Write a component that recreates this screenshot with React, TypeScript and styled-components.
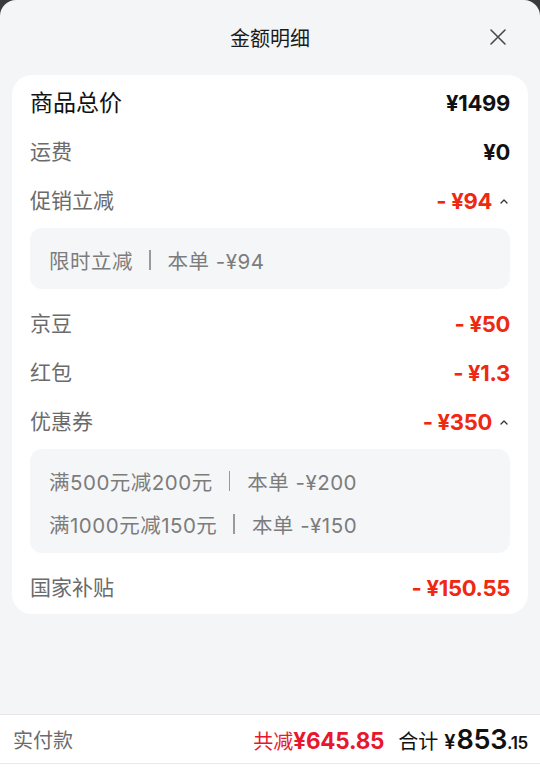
import React from "react";
import styled, { createGlobalStyle } from "styled-components";

const Global = createGlobalStyle`
  html, body { margin: 0; padding: 0; background: #3b3b3d; }
  body { font-family: "Noto Sans CJK SC", "Noto Sans", sans-serif; }
  * { box-sizing: border-box; }
`;

const Sheet = styled.div`
  width: 540px;
  height: 781px;
  background: #f4f5f7;
  border-radius: 16px 16px 0 0;
  display: flex;
  flex-direction: column;
  overflow: hidden;
`;

const Header = styled.div`
  height: 75px;
  flex: none;
  display: flex;
  align-items: center;
  justify-content: center;
  position: relative;
`;

const Title = styled.div`
  font-size: 20px;
  color: #1a1a1a;
  line-height: 1;
`;

const Close = styled.button`
  position: absolute;
  right: 33px;
  top: 28px;
  width: 18px;
  height: 18px;
  padding: 0;
  border: none;
  background: none;
  display: flex;
`;

const Card = styled.div`
  margin: 0 12px;
  background: #fff;
  border-radius: 20px;
  padding: 3px 18px 2px;
  display: flex;
  flex-direction: column;
`;

const Row = styled.div`
  height: 49px;
  display: flex;
  align-items: center;
  justify-content: space-between;
`;

const Label = styled.span<{ $main?: boolean }>`
  font-size: ${(p) => (p.$main ? "23px" : "21px")};
  color: ${(p) => (p.$main ? "#111" : "#6b6b6b")};
  line-height: 1;
  position: relative;
  top: -1px;
`;

const ValueWrap = styled.div`
  display: flex;
  align-items: center;
`;

const Value = styled.span<{ $red?: boolean }>`
  font-family: Inter, "Noto Sans", sans-serif;
  font-weight: 700;
  font-size: 22px;
  letter-spacing: -0.3px;
  color: ${(p) => (p.$red ? "#ef2812" : "#111")};
  line-height: 1;
`;

const Caret = styled.svg`
  margin-left: 6px;
  width: 12px;
  height: 8px;
  flex: none;
`;

const Detail = styled.div`
  background: #f5f6f8;
  border-radius: 12px;
  padding: 10px 19px 8px;
  margin: 3px 0 10px;
  display: flex;
  flex-direction: column;
`;

const DetailLine = styled.div`
  height: 43px;
  display: flex;
  align-items: center;
  font-family: Inter, "Noto Sans CJK SC", sans-serif;
  font-size: 20.5px;
  color: #7c7c7c;
  white-space: pre;
`;

const Part = styled.span`
  letter-spacing: 0.5px;
`;

const Sep = styled.span`
  width: 1.5px;
  height: 20px;
  background: #9a9a9a;
  margin: 0 17px 0 16px;
`;

const Spacer = styled.div`
  flex: 1;
`;

const Bottom = styled.div`
  flex: none;
  background: #fff;
  border-top: 1px solid #e6e6e8;
  padding-bottom: 17px;
`;

const Bar = styled.div`
  height: 49px;
  border-bottom: 1px solid #e9e9eb;
  display: flex;
  align-items: center;
  justify-content: space-between;
  padding: 0 12px 0 13px;
`;

const BarLabel = styled.span`
  font-size: 20px;
  color: #6b6b6b;
`;

const Totals = styled.div`
  display: flex;
  align-items: baseline;
`;

const SaveText = styled.span`
  font-size: 20px;
  color: #e8172d;
`;

const SaveNum = styled.span`
  font-family: Inter, "Noto Sans", sans-serif;
  font-weight: 700;
  font-size: 22.5px;
  color: #e8172d;
  letter-spacing: -0.2px;
`;

const SumText = styled.span`
  font-size: 20px;
  color: #111;
  margin-left: 14px;
  margin-right: 6px;
`;

const Yen = styled.span`
  font-family: Inter, "Noto Sans", sans-serif;
  font-weight: 600;
  font-size: 20px;
  color: #111;
  margin-right: 1px;
`;

const Big = styled.span<{ $size: number }>`
  font-family: Inter, "Noto Sans", sans-serif;
  font-weight: 600;
  font-size: ${(p) => p.$size}px;
  color: #111;
  letter-spacing: -0.3px;
`;

const UpCaret = () => (
  <Caret viewBox="0 0 12 8">
    <polyline points="3,6 6,3 9,6" fill="none" stroke="#333" strokeWidth="1.3" strokeLinecap="round" strokeLinejoin="round" />
  </Caret>
);

const Line = ({ name, amount }: { name: string; amount: string }) => (
  <DetailLine>
    <Part>{name}</Part>
    <Sep />
    <Part>{amount}</Part>
  </DetailLine>
);

export default function App() {
  return (
    <>
      <Global />
      <Sheet>
        <Header>
          <Title>金额明细</Title>
          <Close aria-label="关闭">
            <svg width="18" height="18" viewBox="0 0 18 18">
              <path d="M2 2 L16 16 M16 2 L2 16" stroke="#4a4a4a" strokeWidth="1.6" strokeLinecap="round" />
            </svg>
          </Close>
        </Header>
        <Card>
          <Row>
            <Label $main>商品总价</Label>
            <Value>¥1499</Value>
          </Row>
          <Row>
            <Label>运费</Label>
            <Value>¥0</Value>
          </Row>
          <Row>
            <Label>促销立减</Label>
            <ValueWrap>
              <Value $red>- ¥94</Value>
              <UpCaret />
            </ValueWrap>
          </Row>
          <Detail>
            <Line name="限时立减" amount="本单 -¥94" />
          </Detail>
          <Row>
            <Label>京豆</Label>
            <Value $red>- ¥50</Value>
          </Row>
          <Row>
            <Label>红包</Label>
            <Value $red>- ¥1.3</Value>
          </Row>
          <Row>
            <Label>优惠券</Label>
            <ValueWrap>
              <Value $red>- ¥350</Value>
              <UpCaret />
            </ValueWrap>
          </Row>
          <Detail>
            <Line name="满500元减200元" amount="本单 -¥200" />
            <Line name="满1000元减150元" amount="本单 -¥150" />
          </Detail>
          <Row>
            <Label>国家补贴</Label>
            <Value $red>- ¥150.55</Value>
          </Row>
        </Card>
        <Spacer />
        <Bottom>
          <Bar>
            <BarLabel>实付款</BarLabel>
            <Totals>
              <SaveText>共减</SaveText>
              <SaveNum>¥645.85</SaveNum>
              <SumText>合计</SumText>
              <Yen>¥</Yen>
              <Big $size={27}>853</Big>
              <Big $size={17}>.15</Big>
            </Totals>
          </Bar>
        </Bottom>
      </Sheet>
    </>
  );
}
